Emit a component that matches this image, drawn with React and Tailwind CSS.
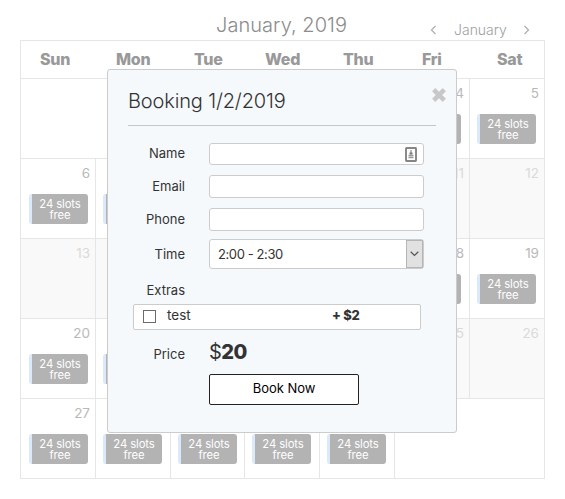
import React from "react";

const dayNames = [
  ["Sun", "pl-[19px]"],
  ["Mon", "pl-[20px]"],
  ["Tue", "pl-[23px]"],
  ["Wed", "pl-[20px]"],
  ["Thu", "pl-[23px]"],
  ["Fri", "pl-[27px]"],
  ["Sat", "pl-[27px]"],
];

const closedDays = [8, 9, 10, 11, 12, 13, 14, 15, 25, 26];
const grid = "grid grid-cols-[75px_75px_74px_75px_75px_75px_75px]";

function Badge({ first, covered }) {
  return (
    <div
      className={`${first ? "ml-[8px]" : "ml-[7px]"} mt-[11px] h-[30px] w-[59px] rounded-[3px] border-l-[3px] border-[#dbe9fc] bg-[#b3b3b3] px-[5px] pt-[5px] text-center text-[11.3px] leading-[11px] tracking-[-0.1px] text-white`}
    >
      {!covered && "24 slots free"}
    </div>
  );
}

// The open dialog hides the labels of the middle columns in every week but the last.
function Day({ day, column }) {
  const closed = closedDays.includes(day);
  const covered = day < 27 && column > 0 && column < 6;
  return (
    <div className={`h-[80px] border-t border-l border-[#e6e6e6] ${closed ? "bg-[#f9f9f9]" : ""}`}>
      <div className={`h-[24px] pt-[5px] pr-[5px] text-right text-[13.5px] leading-[18px] ${closed ? "text-[#dadada]" : "text-[#b9b9b9]"}`}>
        {(!covered || column === 5) && day}
      </div>
      {!closed && <Badge first={column === 0} covered={covered} />}
    </div>
  );
}

function Calendar() {
  const weekStarts = [6, 13, 20];
  return (
    <div className="ml-[20px] w-[525px] border-r border-b border-[#e6e6e6]">
      <div className={`${grid} h-[38px] border-t border-l border-[#e6e6e6] text-[16px] leading-[36px] font-extrabold tracking-[-0.3px] text-[#999]`}>
        {dayNames.map(([name, pad]) => (
          <div key={name} className={pad}>{name}</div>
        ))}
      </div>
      <div className={grid}>
        <div className="col-span-2 border-t border-l border-[#e6e6e6]" />
        {[1, 2, 3, 4, 5].map((d) => <Day key={d} day={d} column={d + 1} />)}
      </div>
      {weekStarts.map((start) => (
        <div key={start} className={grid}>
          {[0, 1, 2, 3, 4, 5, 6].map((c) => <Day key={c} day={start + c} column={c} />)}
        </div>
      ))}
      <div className={grid}>
        {[0, 1, 2, 3, 4].map((c) => (
          <div key={c} className="h-[80px] border-t border-l border-[#e6e6e6]">
            <div className="h-[24px] pt-[5px] pr-[5px] text-right text-[13.5px] leading-[18px] text-[#b9b9b9]">
              {c === 0 && 27}
            </div>
            <Badge first={c === 0} />
          </div>
        ))}
        <div className="col-span-2 border-t border-l border-[#e6e6e6]" />
      </div>
    </div>
  );
}

const labelClass = "w-[57px] shrink-0 text-right text-[13px] leading-[20px]";

function Field({ label, children }) {
  return (
    <div className="mb-[10px] flex h-[23px] items-center">
      <div className={`${labelClass} pb-px`}>{label}</div>
      <div className={`${children ? "mt-px h-[22px]" : "h-[23px]"} ml-[24px] flex w-[215px] items-center justify-end rounded-[3px] border border-[#ccc] bg-white pr-[6px]`}>
        {children}
      </div>
    </div>
  );
}

function BookingDialog() {
  return (
    <div className="absolute top-[69px] left-[107px] h-[364px] w-[350px] rounded-[3px] border border-[#ccc] bg-[#f5f9fc] pl-[20px] text-[#333]">
      <div className="flex h-[56px] w-[308px] justify-between border-b border-[#c3c7ca]">
        <h2 className="pt-[17px] text-[20px] leading-[28px] font-[350] tracking-[-0.15px] whitespace-nowrap">Booking 1/2/2019</h2>
        <svg className="mt-[18px] mr-[-10px] h-[14px] w-[14px]" viewBox="0 0 14 14" stroke="#c8c8c8" strokeWidth="4.6">
          <path d="M1.7 1.7 12.3 12.3M12.3 1.7 1.7 12.3" />
        </svg>
      </div>
      <div className="h-[16px]" />
      <Field label="Name">
        <svg width="12" height="15" viewBox="0 0 12 15">
          <rect x="1" y="1" width="10" height="13" rx="0.5" fill="#fff" stroke="#858585" strokeWidth="1.9" />
          <path d="M5.5 3h1v2.5h1v2h-3v-2h1z" fill="#777" />
          <path d="M3.5 8.5h5M3.5 10.5h5" stroke="#999" strokeWidth="1.3" />
        </svg>
      </Field>
      <Field label="Email" />
      <Field label="Phone" />
      <div className="mt-[-2px] flex h-[30px] items-center">
        <div className={labelClass}>Time</div>
        <div className="ml-[24px] flex h-[30px] w-[215px] items-stretch justify-between rounded-[3px] border border-[#ccc] bg-white">
          <span className="pl-[8px] text-[13px] leading-[28px] tracking-[-0.4px]">2:00 - 2:30</span>
          <span className="flex w-[17px] items-center justify-center border border-[#b5b5b5] bg-[#e1e1e1]">
            <svg width="9" height="6" viewBox="0 0 9 6" fill="none" stroke="#555" strokeWidth="1.2">
              <path d="M.7.8 4.5 4.5 8.3.8" />
            </svg>
          </span>
        </div>
      </div>
      <div className={`${labelClass} mt-[11px]`}>Extras</div>
      <div className="mt-[4px] ml-[5px] flex h-[26px] w-[288px] items-start rounded-[2px] border border-[#ccc] bg-white">
        <span className="mt-[5px] ml-[9px] h-[13px] w-[13px] shrink-0 border border-[#6c6c6c] bg-white" />
        <span className="ml-[11px] w-[165px] text-[13.5px] leading-[20px]">test</span>
        <span className="text-[13px] leading-[20px] font-extrabold tracking-[-0.3px]">+ $2</span>
      </div>
      <div className="mt-[9px] flex h-[26px] items-center">
        <div className={`${labelClass} pt-[4px]`}>Price</div>
        <div className="ml-[24px] text-[20px] leading-[26px] tracking-[-0.6px]">$<b className="font-extrabold">20</b></div>
      </div>
      <button className="mt-[9px] ml-[81px] block h-[31px] w-[150px] rounded-[2px] border border-[#222] bg-white pb-[2px] text-[13px] leading-[27px] tracking-[-0.05px] text-black">
        Book Now
      </button>
    </div>
  );
}

export default function App() {
  return (
    <div className="relative h-[499px] w-[565px] overflow-hidden bg-white font-['Inter',sans-serif]">
      <div className="flex h-[40px] items-start">
        <h1 className="ml-[216px] w-[214px] pt-[11px] text-[20px] leading-[28px] font-[350] tracking-[0.05px] text-[#8c8c8c]">January, 2019</h1>
        <div className="mt-[20px] flex h-[20px] items-center">
          <svg width="7" height="10" viewBox="0 0 7 10" fill="none" stroke="#b0b0b0" strokeWidth="1.3"><path d="M5.5 1 1.5 5l4 4" /></svg>
          <span className="ml-[17px] w-[69px] text-[14px] leading-[20px] font-light text-[#a0a0a0]">January</span>
          <svg width="7" height="10" viewBox="0 0 7 10" fill="none" stroke="#b0b0b0" strokeWidth="1.3"><path d="m1.5 1 4 4-4 4" /></svg>
        </div>
      </div>
      <Calendar />
      <BookingDialog />
    </div>
  );
}
